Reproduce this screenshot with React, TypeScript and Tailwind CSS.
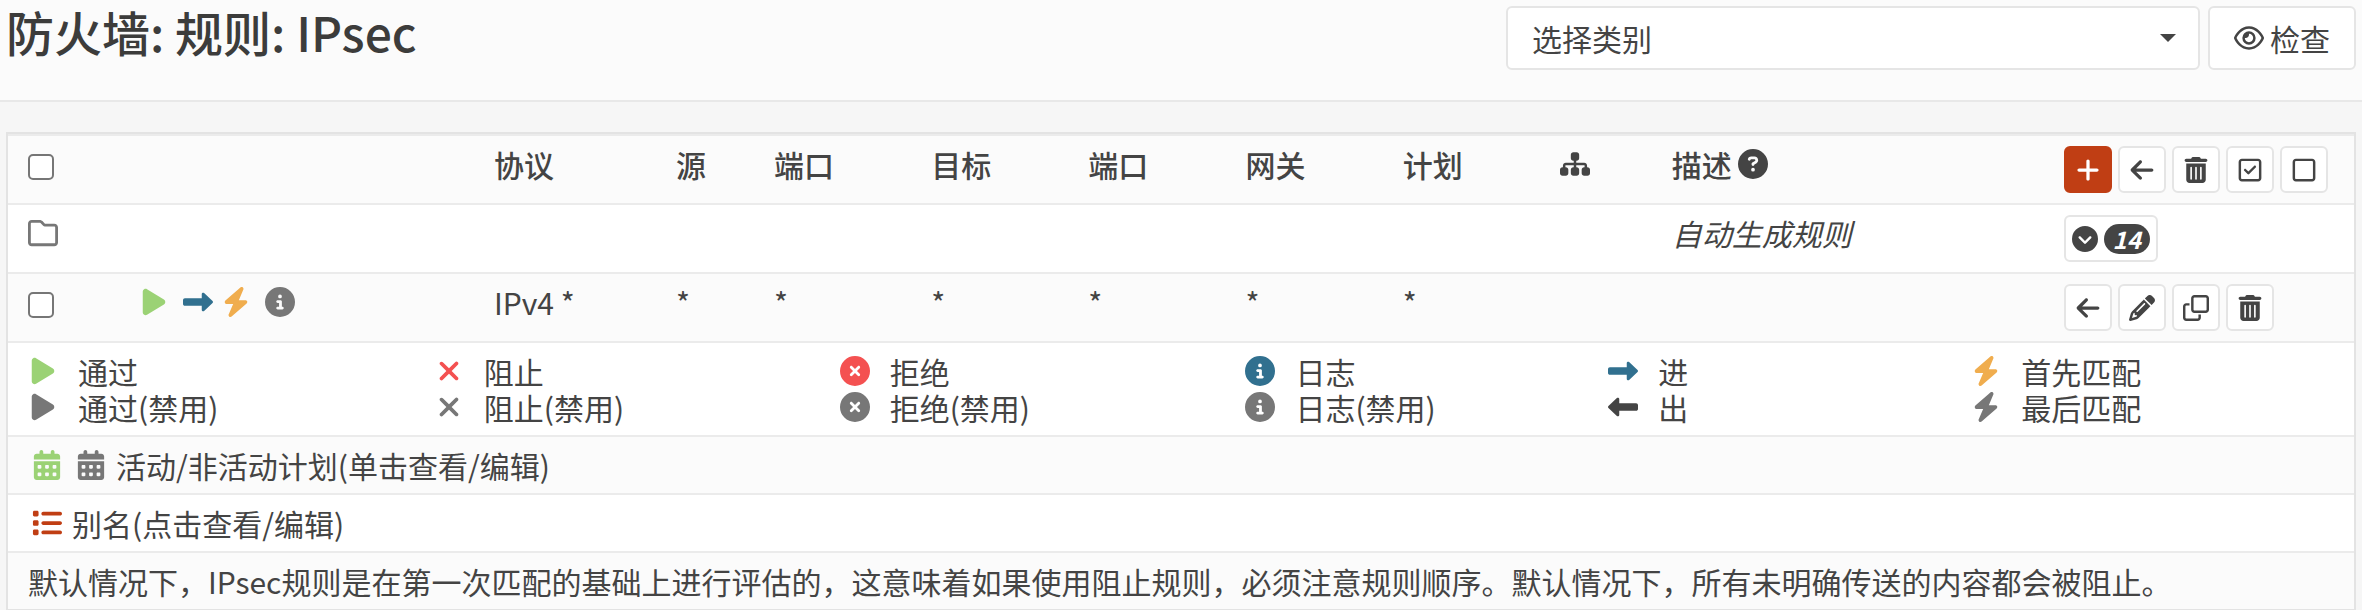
import type { ReactNode } from "react"
import type { IconType } from "react-icons"
import {
  FaArrowLeft,
  FaBolt,
  FaCalendarDays,
  FaCircleChevronDown,
  FaCircleInfo,
  FaCircleQuestion,
  FaCircleXmark,
  FaLeftLong,
  FaList,
  FaPencil,
  FaPlay,
  FaPlus,
  FaRegClone,
  FaRegEye,
  FaRegFolder,
  FaRegSquare,
  FaRegSquareCheck,
  FaRightLong,
  FaSitemap,
  FaTrashCan,
  FaXmark,
} from "react-icons/fa6"

const green = "text-[#9bd275]"
const red = "text-[#f45151]"
const blue = "text-[#31708f]"
const orange = "text-[#f0ad4e]"
const gray = "text-[#777777]"
const dark = "text-[#444444]"

const legend: { icon: IconType; color: string; label: string }[][] = [
  [
    { icon: FaPlay, color: green, label: "通过" },
    { icon: FaPlay, color: gray, label: "通过(禁用)" },
  ],
  [
    { icon: FaXmark, color: red, label: "阻止" },
    { icon: FaXmark, color: gray, label: "阻止(禁用)" },
  ],
  [
    { icon: FaCircleXmark, color: red, label: "拒绝" },
    { icon: FaCircleXmark, color: gray, label: "拒绝(禁用)" },
  ],
  [
    { icon: FaCircleInfo, color: blue, label: "日志" },
    { icon: FaCircleInfo, color: gray, label: "日志(禁用)" },
  ],
  [
    { icon: FaRightLong, color: blue, label: "进" },
    { icon: FaLeftLong, color: dark, label: "出" },
  ],
  [
    { icon: FaBolt, color: orange, label: "首先匹配" },
    { icon: FaBolt, color: gray, label: "最后匹配" },
  ],
]

const cell = "px-5 py-[10px] align-top"
const line = "border-t-2 border-[#ebebeb]"

function Icon({ icon: Glyph, color = "" }: { icon: IconType; color?: string }) {
  return <Glyph className={`h-[30px] w-auto shrink-0 ${color}`} />
}

// Centred in a fixed-width slot
function FixedIcon({ icon, color }: { icon: IconType; color: string }) {
  return (
    <span className="flex h-9 w-[38px] shrink-0 items-center justify-center">
      <Icon icon={icon} color={color} />
    </span>
  )
}

function ActionButton({ icon: Glyph, label, primary }: { icon: IconType; label: string; primary?: boolean }) {
  return (
    <button
      type="button"
      aria-label={label}
      className={`flex h-[47px] w-12 items-center justify-center rounded-md border-2 ${
        primary ? "border-[#c03e14] bg-[#c03e14] text-white" : "border-[#e5e5e5] bg-white"
      }`}
    >
      <Glyph className="h-[26px] w-auto" />
    </button>
  )
}

function Checkbox({ label }: { label: string }) {
  return (
    <input
      type="checkbox"
      aria-label={label}
      className="mt-2 block size-[26px] appearance-none rounded-[5px] border-2 border-[#767676] bg-white checked:bg-[#c03e14]"
    />
  )
}

function NoteRow({ striped, children }: { striped?: boolean; children: ReactNode }) {
  return (
    <tr className={striped ? "bg-[#fbfbfb]" : "bg-white"}>
      <td colSpan={12} className={`${cell} ${line}`}>
        {children}
      </td>
    </tr>
  )
}

export default function App() {
  return (
    <div className="min-h-screen bg-[#f6f6f6] font-['Noto_Sans_CJK_SC',sans-serif] text-[30px] leading-9 text-[#444444]">
      <header className="flex h-[102px] items-start justify-between border-b-2 border-[#e8e8e8] bg-[#fbfbfb] px-[6px] pt-[6px]">
        <h1 className="text-[48px] leading-[50px] font-medium text-[#3c3c3b]">防火墙: 规则: IPsec</h1>
        <div className="flex gap-2">
          <div className="relative">
            <select
              aria-label="选择类别"
              className="h-16 w-[694px] appearance-none rounded-md border-2 border-[#e5e5e5] bg-white pr-16 pl-6"
            >
              <option>选择类别</option>
            </select>
            <svg
              viewBox="0 0 16 8"
              className="pointer-events-none absolute top-7 right-6 h-2 w-4"
              fill="currentColor"
            >
              <path d="M0 0h16L8 8z" />
            </svg>
          </div>
          <button
            type="button"
            className="flex h-16 items-center gap-[6px] rounded-md border-2 border-[#e5e5e5] bg-white px-6"
          >
            <Icon icon={FaRegEye} />
            检查
          </button>
        </div>
      </header>

      <main className="px-[6px] pt-[30px]">
        <div className="border-2 border-b border-[#e3e3e3]">
          <table className="w-full table-fixed border-separate border-spacing-0 text-left">
            <colgroup>
              <col className="w-[4.56%]" />
              <col className="w-[15.3%]" />
              <col className="w-[7.76%]" />
              <col className="w-[4.18%]" />
              <col className="w-[6.7%]" />
              <col className="w-[6.7%]" />
              <col className="w-[6.7%]" />
              <col className="w-[6.7%]" />
              <col className="w-[6.7%]" />
              <col className="w-[4.77%]" />
              <col className="w-[16.71%]" />
              <col className="w-[13.22%]" />
            </colgroup>
            <thead>
              <tr className="bg-[#fbfbfb]">
                <th className={`${cell} ${line}`}>
                  <Checkbox label="全选" />
                </th>
                <th className={`${cell} ${line}`} />
                <th className={`${cell} ${line} font-medium`}>协议</th>
                <th className={`${cell} ${line} font-medium`}>源</th>
                <th className={`${cell} ${line} font-medium`}>端口</th>
                <th className={`${cell} ${line} font-medium`}>目标</th>
                <th className={`${cell} ${line} font-medium`}>端口</th>
                <th className={`${cell} ${line} font-medium`}>网关</th>
                <th className={`${cell} ${line} font-medium`}>计划</th>
                <th className={`${cell} ${line}`}>
                  <span className="flex h-9 items-center">
                    <Icon icon={FaSitemap} />
                  </span>
                </th>
                <th className={`${cell} ${line} font-medium`}>
                  <span className="flex h-9 items-center gap-[6px]">
                    描述
                    <Icon icon={FaCircleQuestion} />
                  </span>
                </th>
                <th className={`${cell} ${line}`}>
                  <div className="flex gap-[6px]">
                    <ActionButton icon={FaPlus} label="添加" primary />
                    <ActionButton icon={FaArrowLeft} label="移动到末尾" />
                    <ActionButton icon={FaTrashCan} label="删除所选" />
                    <ActionButton icon={FaRegSquareCheck} label="启用所选" />
                    <ActionButton icon={FaRegSquare} label="禁用所选" />
                  </div>
                </th>
              </tr>
            </thead>
            <tbody>
              <tr className="bg-white">
                <td className={`${cell} ${line}`}>
                  <span className="flex h-9 items-center">
                    <Icon icon={FaRegFolder} color={gray} />
                  </span>
                </td>
                <td colSpan={9} className={line} />
                <td className={`${cell} ${line} italic`}>自动生成规则</td>
                <td className={`${cell} ${line}`}>
                  <button
                    type="button"
                    aria-label="展开自动生成规则"
                    className="flex h-[47px] items-center gap-[6px] rounded-md border-2 border-[#e5e5e5] bg-white px-[6px]"
                  >
                    <FaCircleChevronDown className="size-[26px]" />
                    <span className="flex h-[30px] w-[46px] items-center justify-center rounded-full bg-[#444444] text-[24px] leading-6 font-bold text-white italic">
                      14
                    </span>
                  </button>
                </td>
              </tr>
              <tr className="bg-[#fbfbfb]">
                <td className={`${cell} ${line}`}>
                  <Checkbox label="选择规则" />
                </td>
                <td className={`${cell} ${line}`}>
                  <div className="flex gap-[6px]">
                    <FixedIcon icon={FaPlay} color={green} />
                    <span className="flex">
                      <FixedIcon icon={FaRightLong} color={blue} />
                      <FixedIcon icon={FaBolt} color={orange} />
                    </span>
                    <FixedIcon icon={FaCircleInfo} color={gray} />
                  </div>
                </td>
                <td className={`${cell} ${line}`}>IPv4 *</td>
                <td className={`${cell} ${line}`}>*</td>
                <td className={`${cell} ${line}`}>*</td>
                <td className={`${cell} ${line}`}>*</td>
                <td className={`${cell} ${line}`}>*</td>
                <td className={`${cell} ${line}`}>*</td>
                <td className={`${cell} ${line}`}>*</td>
                <td className={`${cell} ${line}`} />
                <td className={`${cell} ${line}`} />
                <td className={`${cell} ${line}`}>
                  <div className="flex gap-[6px]">
                    <ActionButton icon={FaArrowLeft} label="移动到此规则之前" />
                    <ActionButton icon={FaPencil} label="编辑" />
                    <ActionButton icon={FaRegClone} label="克隆" />
                    <ActionButton icon={FaTrashCan} label="删除" />
                  </div>
                </td>
              </tr>
            </tbody>
            <tfoot>
              <NoteRow>
                <div className="grid grid-cols-[406fr_406fr_406fr_363fr_363fr_363fr]">
                  {legend.map((group) => (
                    <ul key={group[0].label}>
                      {group.map((item) => (
                        <li key={item.label} className="flex h-9 items-center">
                          <span className="w-[50px]">
                            <Icon icon={item.icon} color={item.color} />
                          </span>
                          {item.label}
                        </li>
                      ))}
                    </ul>
                  ))}
                </div>
              </NoteRow>
              <NoteRow striped>
                <div className="flex gap-[6px]">
                  <FixedIcon icon={FaCalendarDays} color={green} />
                  <FixedIcon icon={FaCalendarDays} color={gray} />
                  活动/非活动计划(单击查看/编辑)
                </div>
              </NoteRow>
              <NoteRow>
                <div className="flex gap-[6px]">
                  <FixedIcon icon={FaList} color="text-[#c03e14]" />
                  别名(点击查看/编辑)
                </div>
              </NoteRow>
              <NoteRow striped>
                默认情况下，IPsec规则是在第一次匹配的基础上进行评估的，这意味着如果使用阻止规则，必须注意规则顺序。默认情况下，所有未明确传送的内容都会被阻止。
              </NoteRow>
            </tfoot>
          </table>
        </div>
      </main>
    </div>
  )
}
